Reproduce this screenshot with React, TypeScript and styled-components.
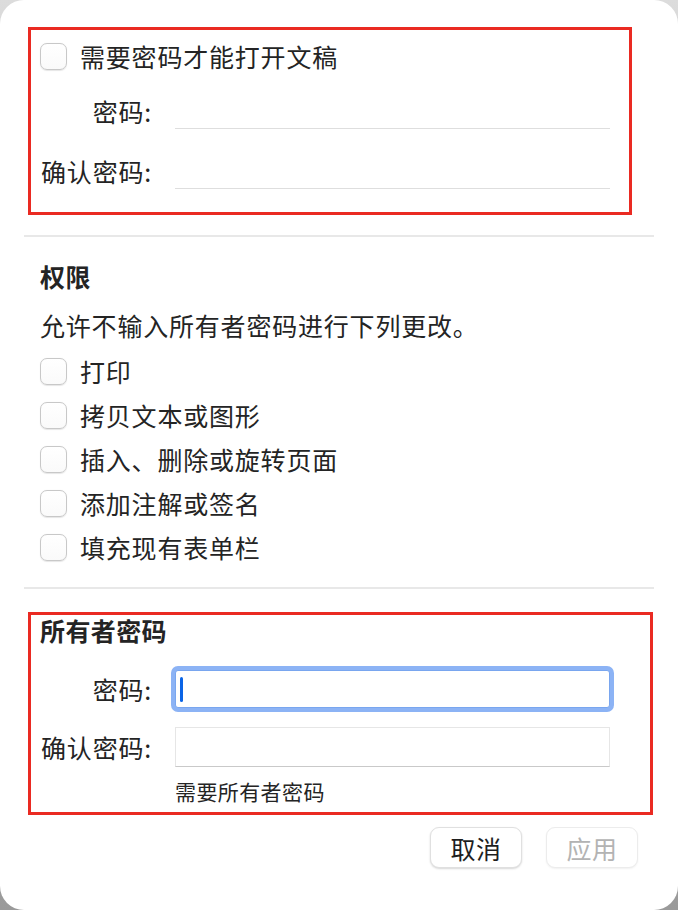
import React from 'react'
import styled, { createGlobalStyle } from 'styled-components'

const GlobalStyle = createGlobalStyle`
  html, body {
    margin: 0;
    padding: 0;
    background: linear-gradient(to bottom, #dcdcdc 0%, #b4b4b4 50%, #9a9a9a 100%);
  }
  body {
    font-family: "Noto Sans CJK SC", "Noto Sans", sans-serif;
    color: #242424;
  }
`

const Panel = styled.div`
  width: 678px;
  height: 910px;
  box-sizing: border-box;
  background: #fff;
  border-radius: 24px;
  padding: 27px 24px 0 24px;
  display: flex;
  flex-direction: column;
`

const Marked = styled.div<{ $right: number; $pt: number; $pb: number; $mt?: number }>`
  margin: ${(p) => p.$mt ?? 0}px ${(p) => p.$right}px 0 4px;
  border: 3px solid #ea2a22;
  padding: ${(p) => p.$pt}px 0 ${(p) => p.$pb}px 9px;
  display: flex;
  flex-direction: column;
`

const Divider = styled.div<{ $top: number }>`
  height: 2px;
  background: #e8e8e8;
  margin-top: ${(p) => p.$top}px;
`

const Section = styled.div`
  padding: 24px 0 0 16px;
  display: flex;
  flex-direction: column;
`

const Text = styled.div<{ $mt?: number }>`
  font-size: 25px;
  line-height: 32px;
  letter-spacing: 0.8px;
  white-space: nowrap;
  margin-top: ${(p) => p.$mt ?? 0}px;
`

const Heading = styled(Text)`
  font-weight: 700;
  letter-spacing: 0.4px;
  line-height: 30px;
`

const CheckRow = styled.label<{ $mt?: number }>`
  display: flex;
  align-items: center;
  gap: 13px;
  height: 28px;
  margin-top: ${(p) => p.$mt ?? 16}px;
  font-size: 25px;
  letter-spacing: 0.8px;
  white-space: nowrap;
`

const Box = styled.span`
  width: 27px;
  height: 27px;
  box-sizing: border-box;
  border: 1px solid #c8c8c8;
  border-radius: 7px;
  background: linear-gradient(#ffffff, #fafafa);
  box-shadow: 0 0.5px 1px rgba(0, 0, 0, 0.1);
  flex-shrink: 0;
`

const FieldRow = styled.div<{ $mt: number }>`
  display: grid;
  grid-template-columns: 135px 435px;
  align-items: center;
  margin-top: ${(p) => p.$mt}px;
`

const Label = styled.div`
  justify-self: end;
  padding-right: 23px;
  font-size: 25px;
  letter-spacing: 0.8px;
  white-space: nowrap;
`

const LineField = styled.div`
  height: 36px;
  border-bottom: 1px solid #dedede;
`

const BoxField = styled.div<{ $focused?: boolean }>`
  height: ${(p) => (p.$focused ? 38 : 40)}px;
  box-sizing: border-box;
  background: #fff;
  display: flex;
  align-items: center;
  padding-left: 4px;
  border: 1px solid ${(p) => (p.$focused ? '#79a6ef' : '#e6e6e6')};
  border-bottom-color: ${(p) => (p.$focused ? '#79a6ef' : '#c9c9c9')};
  border-radius: ${(p) => (p.$focused ? '3px' : '0')};
  box-shadow: ${(p) => (p.$focused ? '0 0 0 4px #8cb3f5' : 'none')};
`

const Caret = styled.span`
  width: 3px;
  height: 25px;
  border-radius: 2px;
  background: #0a64e6;
`

const Hint = styled.div`
  grid-column: 2;
  font-size: 21px;
  line-height: 26px;
  letter-spacing: 0.4px;
  margin-top: 11px;
`

const Buttons = styled.div`
  display: flex;
  justify-content: flex-end;
  gap: 24px;
  padding-right: 16px;
  margin-top: 12px;
`

const Button = styled.button<{ $disabled?: boolean }>`
  width: 92px;
  height: 41px;
  border-radius: 9px;
  border: 1px solid ${(p) => (p.$disabled ? '#ececec' : '#e0e0e0')};
  background: #fff;
  box-shadow: ${(p) =>
    p.$disabled ? '0 1px 2px rgba(0,0,0,0.06)' : '0 1px 2px rgba(0,0,0,0.16)'};
  font-family: "Noto Sans CJK SC", "Noto Sans", sans-serif;
  font-size: 25px;
  letter-spacing: 0.5px;
  color: ${(p) => (p.$disabled ? '#b3b3b3' : '#1e1e1e')};
  padding: 0;
`

const permissions = ['打印', '拷贝文本或图形', '插入、删除或旋转页面', '添加注解或签名', '填充现有表单栏']

export default function App() {
  return (
    <>
      <GlobalStyle />
      <Panel>
        <Marked $right={22} $pt={12} $pb={23}>
          <CheckRow $mt={0}>
            <Box />
            需要密码才能打开文稿
          </CheckRow>
          <FieldRow $mt={22}>
            <Label>密码:</Label>
            <LineField />
          </FieldRow>
          <FieldRow $mt={23}>
            <Label>确认密码:</Label>
            <LineField />
          </FieldRow>
        </Marked>

        <Divider $top={20} />

        <Section>
          <Heading>权限</Heading>
          <Text $mt={18}>允许不输入所有者密码进行下列更改。</Text>
          {permissions.map((p) => (
            <CheckRow key={p}>
              <Box />
              {p}
            </CheckRow>
          ))}
        </Section>

        <Divider $top={26} />

        <Marked $right={1} $pt={0} $pb={8} $mt={23}>
          <Heading>所有者密码</Heading>
          <FieldRow $mt={25}>
            <Label>密码:</Label>
            <BoxField $focused>
              <Caret />
            </BoxField>
          </FieldRow>
          <FieldRow $mt={19}>
            <Label>确认密码:</Label>
            <BoxField />
            <Hint>需要所有者密码</Hint>
          </FieldRow>
        </Marked>

        <Buttons>
          <Button>取消</Button>
          <Button $disabled>应用</Button>
        </Buttons>
      </Panel>
    </>
  )
}
